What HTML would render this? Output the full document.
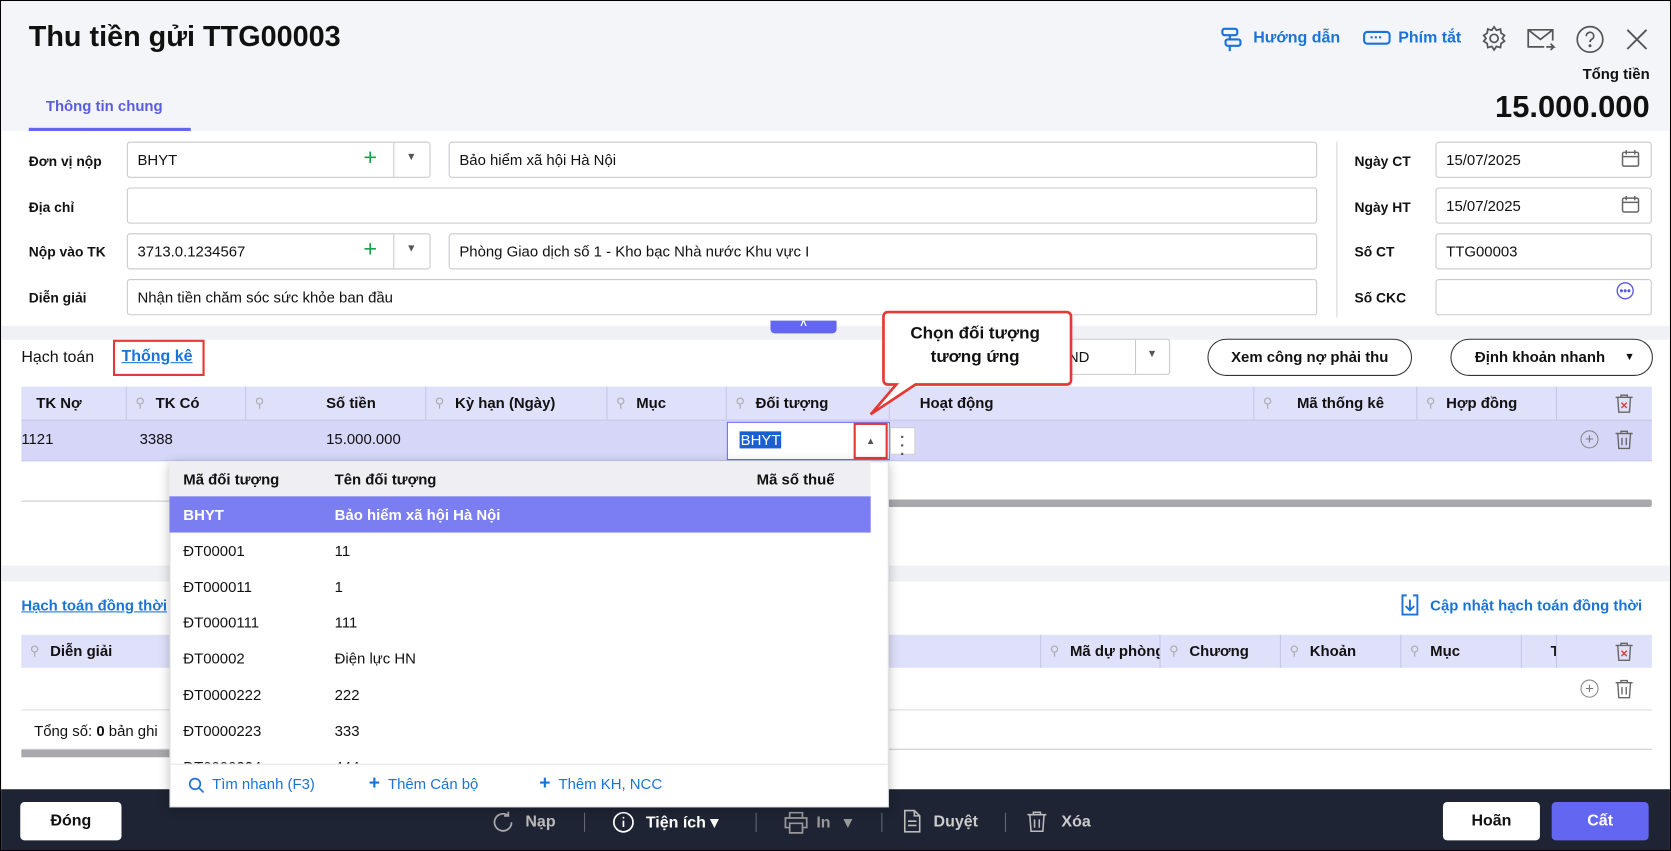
<!DOCTYPE html>
<html><head><meta charset="utf-8"><style>
*{box-sizing:border-box;margin:0;padding:0}
html,body{width:1671px;height:851px;overflow:hidden;background:#fff;font-family:"Liberation Sans",sans-serif;color:#111;font-size:14px}
#w{position:absolute;left:0;top:0;width:1568px;height:799px;transform:scale(1.0657,1.0651);transform-origin:0 0;border:1px solid #000;background:#fff;overflow:hidden}
.a{position:absolute}
.in{position:absolute;height:34px;border:1px solid #c9c9cf;border-radius:3px;background:#fff;padding:0 9px;line-height:32px;font-size:14px}
.lb{position:absolute;font-weight:bold;font-size:13px}
.th{position:absolute;top:362px;height:31px;line-height:31px;font-weight:bold;font-size:14px;border-right:1px solid #c6c7e6;white-space:nowrap;overflow:hidden}
.th i{position:absolute;left:8px;top:0;font-style:normal;color:#aaa;font-weight:normal;font-size:12px}
.blue{color:#1a73d9}
.row{position:absolute;left:158px;width:658px;height:34px;line-height:34px;font-size:14px}
.row span{position:absolute}
.fb{position:absolute;color:#fff;font-size:15px;font-weight:bold;top:762px}
</style></head><body><div id="w">
<div class="a" style="left:0;top:0;width:1568px;height:122px;background:#f4f5f9"></div>
<div class="a" style="left:26px;top:18px;font-size:27px;font-weight:bold">Thu tiền gửi TTG00003</div>
<div class="a" style="left:42px;top:90px;font-size:14px;font-weight:bold;color:#5a5ce0">Thông tin chung</div>
<div class="a" style="left:26px;top:119px;width:152px;height:3px;background:#6366f1"></div>
<svg class="a" style="left:1144px;top:24px" width="22" height="24" viewBox="0 0 22 24" fill="none" stroke="#1a73d9" stroke-width="2"><rect x="2" y="2" width="14" height="6" rx="2"/><rect x="5" y="12" width="14" height="6" rx="2"/><path d="M9 8v4M9 18v5"/></svg>
<div class="a blue" style="left:1175px;top:26px;font-size:15px;font-weight:bold">Hướng dẫn</div>
<svg class="a" style="left:1278px;top:27px" width="26" height="16" viewBox="0 0 26 16" fill="none" stroke="#1a73d9" stroke-width="2"><rect x="1" y="2" width="24" height="11" rx="3"/><path d="M7 7h12" stroke-dasharray="2 2"/></svg>
<div class="a blue" style="left:1311px;top:26px;font-size:15px;font-weight:bold">Phím tắt</div>
<svg class="a" style="left:1388px;top:22px" width="26" height="26" viewBox="0 0 24 24" fill="none" stroke="#555" stroke-width="1.5"><circle cx="12" cy="12" r="3.5"/><path d="M12 2l2 3 3.5-1 .5 3.5 3 2-2 2.5 2 2.5-3 2-.5 3.5-3.5-1-2 3-2-3-3.5 1-.5-3.5-3-2 2-2.5-2-2.5 3-2 .5-3.5 3.5 1z"/></svg>
<svg class="a" style="left:1431px;top:24px" width="28" height="24" viewBox="0 0 28 24" fill="none" stroke="#555" stroke-width="1.6"><path d="M17 19H2V3h23v10M2 3l11.5 9L25 3M19 19h7l-3-3M26 19l-3 3"/></svg>
<svg class="a" style="left:1477px;top:22px" width="28" height="28" viewBox="0 0 28 28" fill="none" stroke="#555" stroke-width="1.6"><circle cx="14" cy="14" r="12"/><path d="M10.5 11a3.5 3.5 0 1 1 5 3c-1 .6-1.5 1.3-1.5 2.5"/><circle cx="14" cy="20" r=".6" fill="#555"/></svg>
<svg class="a" style="left:1524px;top:25px" width="22" height="22" viewBox="0 0 22 22" stroke="#555" stroke-width="1.8"><path d="M2 2l18 18M20 2L2 20"/></svg>
<div class="a" style="right:19px;top:60px;font-size:14px;font-weight:bold">Tổng tiền</div>
<div class="a" style="right:19px;top:84px;font-size:29px;font-weight:bold">15.000.000</div>
<div class="lb" style="left:26px;top:143px">Đơn vị nộp</div>
<div class="lb" style="left:26px;top:186px">Địa chỉ</div>
<div class="lb" style="left:26px;top:228px">Nộp vào TK</div>
<div class="lb" style="left:26px;top:271px">Diễn giải</div>
<div class="in" style="left:118px;top:132px;width:285px">BHYT</div>
<div class="a" style="left:340px;top:134px;color:#1aa34a;font-size:22px">+</div>
<div class="a" style="left:368px;top:133px;width:1px;height:32px;background:#c9c9cf"></div>
<div class="a" style="left:380px;top:141px;color:#555;font-size:10px">▼</div>
<div class="in" style="left:420px;top:132px;width:815px">Bảo hiểm xã hội Hà Nội</div>
<div class="in" style="left:118px;top:175px;width:1117px"></div>
<div class="in" style="left:118px;top:218px;width:285px">3713.0.1234567</div>
<div class="a" style="left:340px;top:220px;color:#1aa34a;font-size:22px">+</div>
<div class="a" style="left:368px;top:219px;width:1px;height:32px;background:#c9c9cf"></div>
<div class="a" style="left:380px;top:227px;color:#555;font-size:10px">▼</div>
<div class="in" style="left:420px;top:218px;width:815px">Phòng Giao dịch số 1 - Kho bạc Nhà nước Khu vực I</div>
<div class="in" style="left:118px;top:261px;width:1117px">Nhận tiền chăm sóc sức khỏe ban đầu</div>
<div class="a" style="left:1253px;top:132px;width:1px;height:165px;background:#d6d6dc"></div>
<div class="lb" style="left:1270px;top:143px">Ngày CT</div>
<div class="lb" style="left:1270px;top:186px">Ngày HT</div>
<div class="lb" style="left:1270px;top:228px">Số CT</div>
<div class="lb" style="left:1270px;top:271px">Số CKC</div>
<div class="in" style="left:1346px;top:132px;width:203px">15/07/2025</div>
<div class="in" style="left:1346px;top:175px;width:203px">15/07/2025</div>
<div class="in" style="left:1346px;top:218px;width:203px">TTG00003</div>
<div class="in" style="left:1346px;top:261px;width:203px"></div>
<svg class="a" style="left:1520px;top:139px" width="18" height="18" viewBox="0 0 18 18" fill="none" stroke="#666" stroke-width="1.4"><rect x="1.5" y="3" width="15" height="13" rx="1.5"/><path d="M1.5 7h15M5 1v4M13 1v4"/></svg>
<svg class="a" style="left:1520px;top:182px" width="18" height="18" viewBox="0 0 18 18" fill="none" stroke="#666" stroke-width="1.4"><rect x="1.5" y="3" width="15" height="13" rx="1.5"/><path d="M1.5 7h15M5 1v4M13 1v4"/></svg>
<svg class="a" style="left:1515px;top:263px" width="18" height="18" viewBox="0 0 18 18" fill="none" stroke="#5a5ce0" stroke-width="1.3"><circle cx="9" cy="9" r="7.5"/><circle cx="5.5" cy="9" r=".8" fill="#5a5ce0"/><circle cx="9" cy="9" r=".8" fill="#5a5ce0"/><circle cx="12.5" cy="9" r=".8" fill="#5a5ce0"/></svg>
<div class="a" style="left:0;top:305px;width:1568px;height:13px;background:#f0f1f5"></div>
<div class="a" style="left:722px;top:300px;width:62px;height:12px;background:#6366f1;border-radius:0 0 4px 4px;color:#fff;font-size:11px;text-align:center;line-height:10px;font-weight:bold">^</div>
<div class="a" style="left:19px;top:326px;font-size:15px">Hạch toán</div>
<div class="a" style="left:105px;top:318px;width:86px;height:34px;border:2px solid #e53935"></div>
<div class="a blue" style="left:113px;top:325px;font-size:15px;font-weight:bold;text-decoration:underline">Thống kê</div>
<div class="a" style="left:990px;top:317px;width:107px;height:34px;border:1px solid #c9c9cf;border-radius:3px;padding:0 10px;line-height:32px">ND</div>
<div class="a" style="left:1064px;top:318px;width:1px;height:32px;background:#c9c9cf"></div>
<div class="a" style="left:1075px;top:326px;color:#555;font-size:10px">▼</div>
<div class="a" style="left:1132px;top:317px;width:192px;height:35px;border:1px solid #333;border-radius:18px;text-align:center;line-height:33px;font-weight:bold;font-size:14px">Xem công nợ phải thu</div>
<div class="a" style="left:1360px;top:317px;width:190px;height:35px;border:1px solid #333;border-radius:18px;line-height:33px;font-weight:bold;font-size:14px;padding-left:22px">Định khoản nhanh<span style="position:absolute;right:16px;font-size:10px">▼</span></div>
<div class="a" style="left:19px;top:362px;width:1530px;height:31px;background:#dfe0fa"></div>
<div class="a" style="left:19px;top:393px;width:1530px;height:39px;background:#d6d7f8;border-top:1px solid #c6c7e6;border-bottom:1px solid #c6c7e6"></div>
<div class="th" style="left:19px;width:99px;padding-left:14px">TK Nợ</div>
<div class="th" style="left:118px;width:112px;padding-left:27px"><i>⚲</i>TK Có</div>
<div class="th" style="left:230px;width:169px;padding-left:75px"><i>⚲</i>Số tiền</div>
<div class="th" style="left:399px;width:170px;padding-left:27px"><i>⚲</i>Kỳ hạn (Ngày)</div>
<div class="th" style="left:569px;width:112px;padding-left:27px"><i>⚲</i>Mục</div>
<div class="th" style="left:681px;width:153px;padding-left:27px"><i>⚲</i>Đối tượng</div>
<div class="th" style="left:834px;width:342px;padding-left:28px">Hoạt động</div>
<div class="th" style="left:1176px;width:153px;padding-left:40px"><i>⚲</i>Mã thống kê</div>
<div class="th" style="left:1329px;width:131px;padding-left:27px"><i>⚲</i>Hợp đồng</div>
<div class="a" style="left:19px;top:403px;font-size:14px">1121</div>
<div class="a" style="left:130px;top:403px;font-size:14px">3388</div>
<div class="a" style="left:305px;top:403px;font-size:14px">15.000.000</div>
<div class="a" style="left:681px;top:395px;width:153px;height:36px;border:1px solid #6366f1;background:#fff"></div>
<div class="a" style="left:693px;top:404px;background:#1a5fd0;color:#fff;font-size:14px;padding:0 1px">BHYT</div>
<div class="a" style="left:800px;top:396px;width:32px;height:34px;border:2px solid #e53935;text-align:center;line-height:30px;font-size:9px;color:#555">▲</div>
<div class="a" style="left:834px;top:400px;width:24px;height:26px;border:1px solid #ccc;background:#fff;text-align:center;font-weight:bold;line-height:8px;padding-top:4px;font-size:14px;color:#555">·<br>·<br>·</div>
<div class="a" style="left:1482px;top:403px;width:17px;height:17px;border:1.3px solid #888;border-radius:50%;text-align:center;line-height:14px;color:#777;font-size:14px">+</div>
<svg class="a" style="left:1514px;top:402px" width="18" height="19" viewBox="0 0 18 19" fill="none" stroke="#666" stroke-width="1.3"><path d="M1 4h16M6 4V2h6v2M3 4l1 14h10l1-14M7 8v7M11 8v7"/></svg>
<svg class="a" style="left:1514px;top:368px" width="18" height="19" viewBox="0 0 18 19" fill="none" stroke="#666" stroke-width="1.3"><path d="M1 4h16M6 4V2h6v2M3 4l1 14h10l1-14"/><path d="M6.5 9l5 5M11.5 9l-5 5" stroke="#e53935"/></svg>
<div class="a" style="left:19px;top:469px;width:1530px;height:1px;background:#ccc"></div>
<div class="a" style="left:832px;top:468px;width:717px;height:7px;background:#a9a9ad;border-radius:2px"></div>
<div class="a" style="left:0;top:530px;width:1568px;height:15px;background:#f0f1f5"></div>
<div class="a blue" style="left:19px;top:559px;font-size:14px;font-weight:bold;text-decoration:underline">Hạch toán đồng thời</div>
<svg class="a" style="left:1312px;top:556px" width="20" height="22" viewBox="0 0 20 22" fill="none" stroke="#1a73d9" stroke-width="1.8"><path d="M7 2H3v18h14V2h-4M10 6v10M6 12l4 4 4-4"/></svg>
<div class="a blue" style="left:1341px;top:559px;font-size:14px;font-weight:bold">Cập nhật hạch toán đồng thời</div>
<div class="a" style="left:19px;top:595px;width:1530px;height:31px;background:#dfe0fa"></div>
<div class="th" style="left:19px;top:595px;width:400px;padding-left:27px;border:none"><i>⚲</i>Diễn giải</div>
<div class="th" style="left:975px;top:595px;width:113px;padding-left:27px;border-left:1px solid #c6c7e6"><i>⚲</i>Mã dự phòng</div>
<div class="th" style="left:1088px;top:595px;width:113px;padding-left:27px"><i>⚲</i>Chương</div>
<div class="th" style="left:1201px;top:595px;width:113px;padding-left:27px"><i>⚲</i>Khoản</div>
<div class="th" style="left:1314px;top:595px;width:113px;padding-left:27px"><i>⚲</i>Mục</div>
<div class="th" style="left:1427px;top:595px;width:33px;padding-left:27px">T</div>
<div class="a" style="left:19px;top:665px;width:1530px;height:1px;background:#ddd"></div>
<div class="a" style="left:1482px;top:637px;width:17px;height:17px;border:1.3px solid #888;border-radius:50%;text-align:center;line-height:14px;color:#777;font-size:14px">+</div>
<svg class="a" style="left:1514px;top:636px" width="18" height="19" viewBox="0 0 18 19" fill="none" stroke="#666" stroke-width="1.3"><path d="M1 4h16M6 4V2h6v2M3 4l1 14h10l1-14M7 8v7M11 8v7"/></svg>
<svg class="a" style="left:1514px;top:601px" width="18" height="19" viewBox="0 0 18 19" fill="none" stroke="#666" stroke-width="1.3"><path d="M1 4h16M6 4V2h6v2M3 4l1 14h10l1-14"/><path d="M6.5 9l5 5M11.5 9l-5 5" stroke="#e53935"/></svg>
<div class="a" style="left:31px;top:677px;font-size:14px">Tổng số: <b>0</b> bản ghi</div>
<div class="a" style="left:19px;top:702px;width:1530px;height:1px;background:#ccc"></div>
<div class="a" style="left:19px;top:703px;width:150px;height:7px;background:#a9a9ad"></div>
<div class="a" style="left:0;top:740px;width:1568px;height:59px;background:#1e2433"></div>
<div class="a" style="left:18px;top:752px;width:95px;height:36px;background:#fff;border-radius:4px;text-align:center;line-height:36px;font-weight:bold;font-size:15px">Đóng</div>
<svg class="a" style="left:459px;top:759px" width="24" height="24" viewBox="0 0 24 24" fill="none" stroke="#aaa" stroke-width="1.6"><path d="M20 12a8 8 0 1 1-3-6.2M17 2v4h-4"/></svg>
<div class="fb" style="left:492px;color:#bbb">Nạp</div>
<div class="a" style="left:547px;top:762px;width:1px;height:18px;background:#667"></div>
<svg class="a" style="left:573px;top:760px" width="22" height="22" viewBox="0 0 22 22" fill="none" stroke="#fff" stroke-width="1.6"><circle cx="11" cy="11" r="9"/><path d="M11 6v1.5M11 9.5v6"/></svg>
<div class="fb" style="left:605px">Tiện ích ▾</div>
<div class="a" style="left:708px;top:762px;width:1px;height:18px;background:#667"></div>
<svg class="a" style="left:734px;top:760px" width="24" height="22" viewBox="0 0 24 22" fill="none" stroke="#999" stroke-width="1.6"><path d="M6 7V2h12v5M6 16H2V7h20v9h-4M6 12h12v9H6z"/></svg>
<div class="fb" style="left:765px;color:#999">In &nbsp; ▾</div>
<div class="a" style="left:826px;top:762px;width:1px;height:18px;background:#667"></div>
<svg class="a" style="left:846px;top:759px" width="18" height="22" viewBox="0 0 18 22" fill="none" stroke="#bbb" stroke-width="1.5"><path d="M2 1h9l5 5v15H2zM11 1v5h5M5 11h8M5 15h8"/></svg>
<div class="fb" style="left:875px;color:#ccc">Duyệt</div>
<div class="a" style="left:942px;top:762px;width:1px;height:18px;background:#667"></div>
<svg class="a" style="left:962px;top:759px" width="20" height="22" viewBox="0 0 18 19" fill="none" stroke="#bbb" stroke-width="1.3"><path d="M1 4h16M6 4V2h6v2M3 4l1 14h10l1-14M7 8v7M11 8v7"/></svg>
<div class="fb" style="left:995px;color:#ccc">Xóa</div>
<div class="a" style="left:1353px;top:752px;width:91px;height:36px;background:#fff;border-radius:4px;text-align:center;line-height:36px;font-weight:bold;font-size:15px">Hoãn</div>
<div class="a" style="left:1455px;top:752px;width:91px;height:36px;background:#6366f1;border-radius:4px;text-align:center;line-height:36px;font-weight:bold;font-size:15px;color:#fff">Cất</div>
<div class="a" style="left:158px;top:432px;width:675px;height:325px;background:#fff;box-shadow:0 2px 10px rgba(0,0,0,.25);border:1px solid #ddd"></div>
<div class="a" style="left:158px;top:432px;width:658px;height:33px;background:#efeff3"></div>
<div class="row" style="top:432px;font-weight:bold"><span style="left:13px">Mã đối tượng</span><span style="left:155px">Tên đối tượng</span><span style="left:551px">Mã số thuế</span></div>
<div class="row" style="top:465px;background:#7b7ef0;color:#fff;font-weight:bold"><span style="left:13px">BHYT</span><span style="left:155px">Bảo hiểm xã hội Hà Nội</span></div>
<div class="row" style="top:499px"><span style="left:13px">ĐT00001</span><span style="left:155px">11</span></div>
<div class="row" style="top:533px"><span style="left:13px">ĐT000011</span><span style="left:155px">1</span></div>
<div class="row" style="top:566px"><span style="left:13px">ĐT0000111</span><span style="left:155px">111</span></div>
<div class="row" style="top:600px"><span style="left:13px">ĐT00002</span><span style="left:155px">Điện lực HN</span></div>
<div class="row" style="top:634px"><span style="left:13px">ĐT0000222</span><span style="left:155px">222</span></div>
<div class="row" style="top:668px"><span style="left:13px">ĐT0000223</span><span style="left:155px">333</span></div>
<div class="row" style="top:702px;height:14px;overflow:hidden"><span style="left:13px">ĐT0000224</span><span style="left:155px">444</span></div>
<div class="a" style="left:159px;top:716px;width:673px;height:40px;background:#fff;border-top:1px solid #e4e4e8"></div>
<svg class="a" style="left:175px;top:728px" width="16" height="16" viewBox="0 0 16 16" fill="none" stroke="#1a73d9" stroke-width="1.6"><circle cx="7" cy="7" r="5"/><path d="M11 11l4 4"/></svg>
<div class="a blue" style="left:198px;top:727px;font-size:14px">Tìm nhanh (F3)</div>
<div class="a blue" style="left:345px;top:724px;font-size:14px"><b style="font-size:18px">+</b>&nbsp; Thêm Cán bộ</div>
<div class="a blue" style="left:505px;top:724px;font-size:14px"><b style="font-size:18px">+</b>&nbsp; Thêm KH, NCC</div>
<svg class="a" style="left:810px;top:288px" width="200" height="108" viewBox="0 0 200 108"><path d="M22 4h168a4 4 0 0 1 4 4v60a4 4 0 0 1-4 4H48L6 100 30 72h-8a4 4 0 0 1-4-4V8a4 4 0 0 1 4-4z" fill="#fff" stroke="#e53935" stroke-width="2.5"/></svg>
<div class="a" style="left:828px;top:302px;width:172px;text-align:center;font-weight:bold;font-size:16px;line-height:22px">Chọn đối tượng<br>tương ứng</div>
</div></body></html>
